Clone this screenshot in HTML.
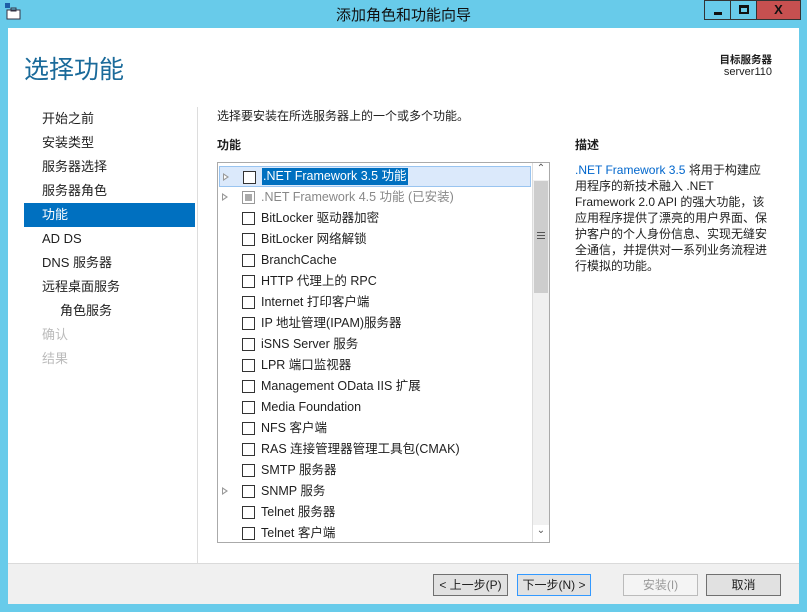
<!DOCTYPE html><html><head><meta charset="utf-8"><style>
*{margin:0;padding:0;box-sizing:border-box}
body{width:807px;height:612px;background:#68cbea;font-family:"Liberation Sans","Noto Sans CJK SC",sans-serif;font-size:13px;color:#1e1e1e;position:relative;overflow:hidden}
.a{position:absolute;white-space:nowrap}
.win{position:absolute;left:8px;top:28px;width:791px;height:576px;background:#fff}
.foot{position:absolute;left:8px;top:563px;width:791px;height:41px;background:#f0f0f0;border-top:1px solid #dadada}
.btn{position:absolute;top:574px;height:22px;border:1px solid #707070;background:#e1e1e1;font-size:12px;text-align:center;line-height:20px}
.nav{position:absolute;left:42px;font-size:13px;line-height:18px;height:18px;color:#1e1e1e}
.row{position:absolute;left:219px;width:312px;height:21px;font-size:12.5px;line-height:21px}
.cb{position:absolute;left:23px;top:4px;width:13px;height:13px;border:1px solid #333;background:#fff}
.t{position:absolute;left:42px}
.tri{position:absolute;left:3px;top:6px;width:0;height:0;border-left:6px solid #999;border-top:4px solid transparent;border-bottom:4px solid transparent}
.tri:after{content:"";position:absolute;left:-5px;top:-2px;border-left:3px solid #fff;border-top:2px solid transparent;border-bottom:2px solid transparent}
</style></head><body>
<svg class="a" style="left:4px;top:2px" width="18" height="20"><rect x="1" y="1" width="5" height="5" fill="#1e5fa8"/><rect x="3" y="8" width="13" height="9" fill="#fff" stroke="#334" stroke-width="1"/><rect x="7" y="6" width="5" height="3" fill="none" stroke="#334"/></svg>
<div class="a" style="left:0;width:807px;top:4px;text-align:center;font-size:15px;color:#111">添加角色和功能向导</div>
<div class="a" style="left:704px;top:0;width:27px;height:20px;background:#68cbea;border:1px solid #333"><div class="a" style="left:9px;top:11px;width:8px;height:3px;background:#111"></div></div>
<div class="a" style="left:730px;top:0;width:27px;height:20px;border:1px solid #333"><div class="a" style="left:8px;top:4px;width:10px;height:9px;border:2px solid #111;border-top-width:3px"></div></div>
<div class="a" style="left:756px;top:0;width:45px;height:20px;background:#c75050;border:1px solid #333;text-align:center;font-weight:bold;font-size:13px;line-height:18px;color:#111">X</div>
<div class="win"></div>
<div class="a" style="left:24px;top:50px;font-size:25px;color:#1a6a9a">选择功能</div>
<div class="a" style="left:690px;top:52px;width:82px;text-align:right;font-size:10.5px;font-weight:bold">目标服务器</div>
<div class="a" style="left:690px;top:66px;width:82px;text-align:right;font-size:11px">server110</div>
<div class="a" style="left:197px;top:107px;width:1px;height:456px;background:#ddd"></div>
<div class="nav" style="top:110px">开始之前</div>
<div class="nav" style="top:134px">安装类型</div>
<div class="nav" style="top:158px">服务器选择</div>
<div class="nav" style="top:182px">服务器角色</div>
<div class="a" style="left:24px;top:203px;width:171px;height:24px;background:#0070c0"></div>
<div class="nav" style="top:206px;color:#fff">功能</div>
<div class="nav" style="top:230px">AD DS</div>
<div class="nav" style="top:254px">DNS 服务器</div>
<div class="nav" style="top:278px">远程桌面服务</div>
<div class="nav" style="top:302px;left:60px">角色服务</div>
<div class="nav" style="top:326px;color:#bbb">确认</div>
<div class="nav" style="top:350px;color:#bbb">结果</div>
<div class="a" style="left:217px;top:107px;font-size:12px">选择要安装在所选服务器上的一个或多个功能。</div>
<div class="a" style="left:217px;top:136px;font-size:12px;font-weight:bold">功能</div>
<div class="a" style="left:575px;top:136px;font-size:12px;font-weight:bold">描述</div>
<div class="a" style="left:575px;top:162px;font-size:12px;line-height:16px;color:#1e1e1e"><span style="color:#0066cc">.NET Framework 3.5</span> 将用于构建应<br>用程序的新技术融入 .NET<br>Framework 2.0 API 的强大功能，该<br>应用程序提供了漂亮的用户界面、保<br>护客户的个人身份信息、实现无缝安<br>全通信，并提供对一系列业务流程进<br>行模拟的功能。</div>
<div class="a" style="left:217px;top:162px;width:333px;height:381px;border:1px solid #aaa;background:#fff;overflow:hidden">
<div class="a" style="left:314px;top:0;width:17px;height:379px;background:#f0f0f0;border-left:1px solid #ddd"></div>
<div class="a" style="left:315px;top:0;width:16px;height:17px;background:#fff;text-align:center;font-size:10px;color:#555">⌃</div>
<div class="a" style="left:316px;top:18px;width:14px;height:112px;background:#cdcdcd"></div>
<div class="a" style="left:319px;top:69px;width:8px;height:7px;border-top:1px solid #555;border-bottom:1px solid #555"><div style="margin-top:2px;height:1px;background:#555"></div></div>
<div class="a" style="left:315px;top:362px;width:16px;height:17px;background:#fff;text-align:center;font-size:10px;color:#555">⌄</div>
</div>
<div class="row" style="top:166px;left:219px;background:#dbe9fb;border:1px solid #99c4f0"><div class="tri"></div><div class="cb"></div><div class="t" style="background:#0070c0;color:#fff;padding:0 1px;line-height:17px;top:1px">.NET Framework 3.5 功能</div></div>
<div class="row" style="top:187px;color:#888"><div class="tri"></div><div class="cb" style="border-color:#999"><div style="margin:2px;width:7px;height:7px;background:#aaa"></div></div><div class="t">.NET Framework 4.5 功能 (已安装)</div></div>
<div class="row" style="top:208px"><div class="cb"></div><div class="t">BitLocker 驱动器加密</div></div>
<div class="row" style="top:229px"><div class="cb"></div><div class="t">BitLocker 网络解锁</div></div>
<div class="row" style="top:250px"><div class="cb"></div><div class="t">BranchCache</div></div>
<div class="row" style="top:271px"><div class="cb"></div><div class="t">HTTP 代理上的 RPC</div></div>
<div class="row" style="top:292px"><div class="cb"></div><div class="t">Internet 打印客户端</div></div>
<div class="row" style="top:313px"><div class="cb"></div><div class="t">IP 地址管理(IPAM)服务器</div></div>
<div class="row" style="top:334px"><div class="cb"></div><div class="t">iSNS Server 服务</div></div>
<div class="row" style="top:355px"><div class="cb"></div><div class="t">LPR 端口监视器</div></div>
<div class="row" style="top:376px"><div class="cb"></div><div class="t">Management OData IIS 扩展</div></div>
<div class="row" style="top:397px"><div class="cb"></div><div class="t">Media Foundation</div></div>
<div class="row" style="top:418px"><div class="cb"></div><div class="t">NFS 客户端</div></div>
<div class="row" style="top:439px"><div class="cb"></div><div class="t">RAS 连接管理器管理工具包(CMAK)</div></div>
<div class="row" style="top:460px"><div class="cb"></div><div class="t">SMTP 服务器</div></div>
<div class="row" style="top:481px"><div class="tri"></div><div class="cb"></div><div class="t">SNMP 服务</div></div>
<div class="row" style="top:502px"><div class="cb"></div><div class="t">Telnet 服务器</div></div>
<div class="row" style="top:523px;height:18px;overflow:hidden"><div class="cb"></div><div class="t">Telnet 客户端</div></div>
<div class="foot"></div>
<div class="btn" style="left:433px;width:75px">&lt; 上一步(P)</div>
<div class="btn" style="left:517px;width:74px;border-color:#3399ff">下一步(N) &gt;</div>
<div class="btn" style="left:623px;width:75px;border-color:#bbb;color:#999;background:#f4f4f4">安装(I)</div>
<div class="btn" style="left:706px;width:75px">取消</div>
</body></html>
